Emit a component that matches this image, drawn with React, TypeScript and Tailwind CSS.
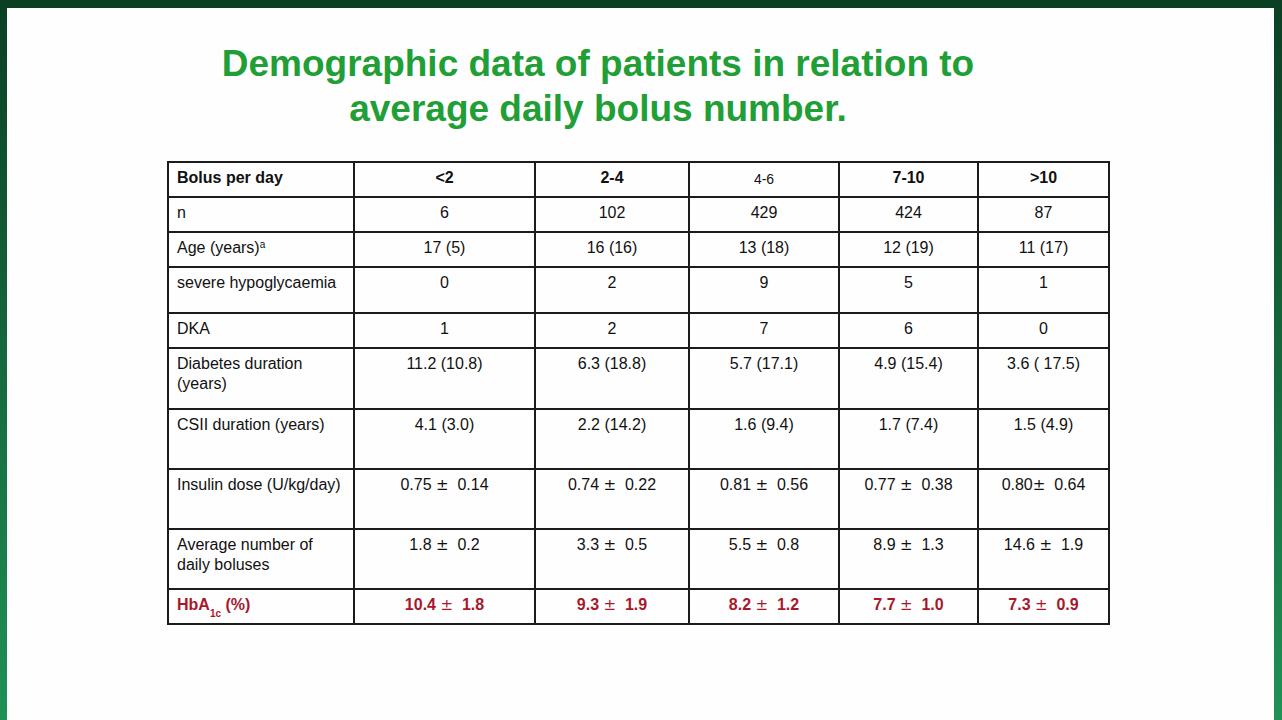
import React from 'react';

type Row = {
  label: React.ReactNode;
  values: React.ReactNode[];
  h: number;
  red?: boolean;
};

const colWidths = [186, 181, 154, 150, 139, 131];

const PlusMinus: React.FC = () => (
  <span className="font-['DejaVu_Sans',sans-serif] font-normal text-[15px]">±</span>
);

const pm = (a: string, b: string, gap = true) => (
  <>
    {a}
    {gap ? ' ' : ''}
    <PlusMinus />
    {'  '}
    {b}
  </>
);

const rows: Row[] = [
  { label: 'n', values: ['6', '102', '429', '424', '87'], h: 35 },
  {
    label: (
      <>
        Age (years)<span className="text-[10px] relative -top-[5px]">a</span>
      </>
    ),
    values: ['17 (5)', '16 (16)', '13 (18)', '12 (19)', '11 (17)'],
    h: 35,
  },
  { label: 'severe hypoglycaemia', values: ['0', '2', '9', '5', '1'], h: 46 },
  { label: 'DKA', values: ['1', '2', '7', '6', '0'], h: 35 },
  {
    label: 'Diabetes duration (years)',
    values: ['11.2 (10.8)', '6.3 (18.8)', '5.7 (17.1)', '4.9 (15.4)', '3.6 ( 17.5)'],
    h: 61,
  },
  {
    label: 'CSII duration (years)',
    values: ['4.1 (3.0)', '2.2 (14.2)', '1.6 (9.4)', '1.7 (7.4)', '1.5 (4.9)'],
    h: 60,
  },
  {
    label: 'Insulin dose (U/kg/day)',
    values: [pm('0.75', '0.14'), pm('0.74', '0.22'), pm('0.81', '0.56'), pm('0.77', '0.38'), pm('0.80', '0.64', false)],
    h: 60,
  },
  {
    label: 'Average number of daily boluses',
    values: [pm('1.8', '0.2'), pm('3.3', '0.5'), pm('5.5', '0.8'), pm('8.9', '1.3'), pm('14.6', '1.9')],
    h: 60,
  },
  {
    label: (
      <>
        HbA<span className="text-[10px] relative top-[7px]">1c</span> (%)
      </>
    ),
    values: [pm('10.4', '1.8'), pm('9.3', '1.9'), pm('8.2', '1.2'), pm('7.7', '1.0'), pm('7.3', '0.9')],
    h: 35,
    red: true,
  },
];

const headers = ['<2', '2-4', '4-6', '7-10', '>10'];

const Cell: React.FC<{ w: number; h: number; first?: boolean; className?: string; children: React.ReactNode }> = ({
  w,
  h,
  first,
  className,
  children,
}) => (
  <div
    style={{ width: w, height: h }}
    className={`box-border border-r-2 border-b-2 border-[#1c1c1c] pt-[5px] leading-[20px] whitespace-pre-wrap ${
      first ? 'pl-[8px] pr-2 text-left' : 'text-center'
    } ${className ?? ''}`}
  >
    {children}
  </div>
);

const App: React.FC = () => {
  return (
    <div className="w-[1282px] h-[720px] overflow-hidden bg-gradient-to-b from-[#0b3f24] via-[#15693d] to-[#1f9256] pt-[8px] pl-[7px] pr-[8px]">
      <div className="bg-[#fefefe] h-[712px] pt-[33px] font-['Liberation_Sans',Arial,sans-serif] text-[#111]">
        <h1 className="mr-[85px] text-center text-[37px] leading-[45px] font-bold text-[#1f9f35]">
          Demographic data of patients in relation to
          <br />
          average daily bolus number.
        </h1>

        <div className="ml-[160px] mt-[30px] w-fit border-l-2 border-t-2 border-[#1c1c1c] text-[16px]">
          <div className="flex">
            <Cell w={colWidths[0]} h={35} first className="font-bold">
              Bolus per day
            </Cell>
            {headers.map((hd, i) => (
              <Cell
                key={hd}
                w={colWidths[i + 1]}
                h={35}
                className={hd === '4-6' ? 'text-[14px] pt-[6px]' : 'font-bold'}
              >
                {hd}
              </Cell>
            ))}
          </div>
          {rows.map((r, ri) => (
            <div key={ri} className={`flex ${r.red ? 'text-[#a8182c] font-bold' : ''}`}>
              <Cell w={colWidths[0]} h={r.h} first>
                {r.label}
              </Cell>
              {r.values.map((v, i) => (
                <Cell key={i} w={colWidths[i + 1]} h={r.h}>
                  {v}
                </Cell>
              ))}
            </div>
          ))}
        </div>
      </div>
    </div>
  );
};

export default App;
